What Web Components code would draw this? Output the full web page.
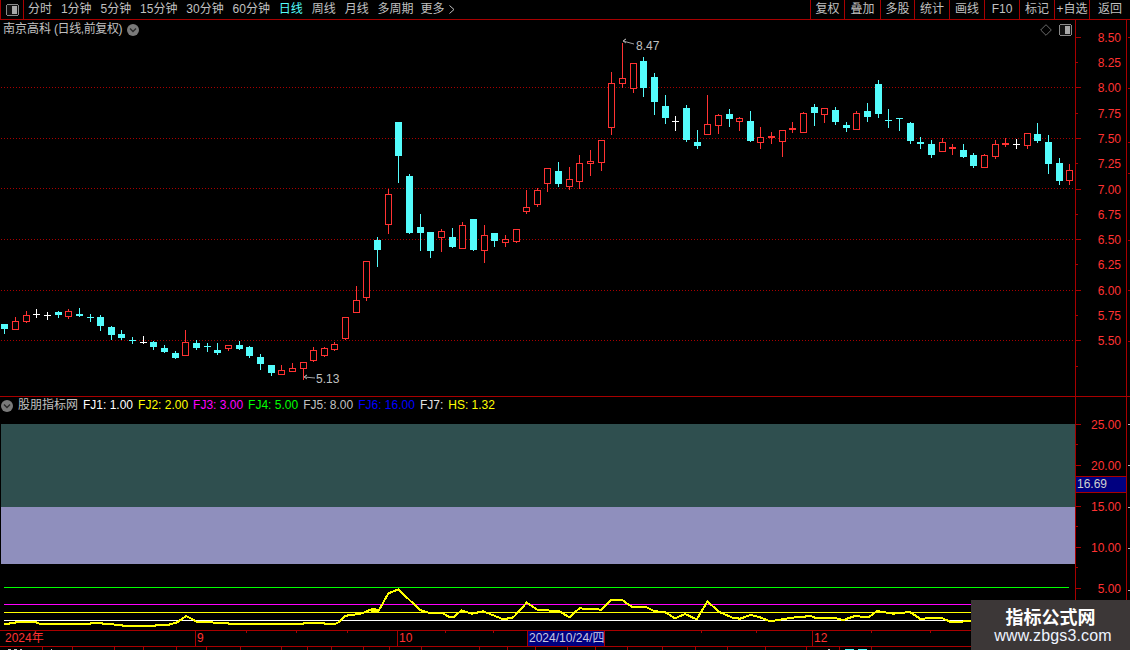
<!DOCTYPE html>
<html>
<head>
<meta charset="utf-8">
<style>
  html, body { margin: 0; height: 100%; background: #000; overflow: hidden; }
</style>
</head>
<body>
<tdx-app>
  <tdx-toolbar></tdx-toolbar>
  <tdx-kline-panel></tdx-kline-panel>
  <tdx-indicator-panel></tdx-indicator-panel>
  <tdx-time-axis></tdx-time-axis>
  <tdx-tab-strip></tdx-tab-strip>
  <site-mark></site-mark>
</tdx-app>

<script>
const FONT = `"Liberation Sans", "Noto Sans CJK SC", sans-serif`;
const LINE = "#a80000";
const RED = "#ff3232";
const CYAN = "#54fcfc";
const GREY = "#c0c0c0";

const chevronIcon = `<svg width="12" height="12" viewBox="0 0 12 12"><circle cx="6" cy="6" r="6" fill="#7a7a7a"/><polyline points="3,4.5 6,7.5 9,4.5" fill="none" stroke="#2a2a2a" stroke-width="1.4"/></svg>`;
const panelIcon = `<svg width="13" height="12" viewBox="0 0 13 12" shape-rendering="crispEdges"><rect x="0.5" y="0.5" width="12" height="11" rx="2" fill="#111" stroke="#8a8a8a"/><rect x="6" y="2" width="5" height="8" fill="#a8a8a8"/></svg>`;

class TdxApp extends HTMLElement {
  constructor() {
    super();
    this.attachShadow({ mode: "open" });
    this.shadowRoot.innerHTML = `
      <style>
        :host {
          display: flex;
          flex-direction: column;
          position: relative;
          width: 1130px;
          height: 650px;
          overflow: hidden;
          background: #000;
          font-family: ${FONT};
        }
      </style>
      <slot></slot>
    `;
  }
}

class TdxToolbar extends HTMLElement {
  constructor() {
    super();
    this.attachShadow({ mode: "open" });
    const periods = ["分时", "1分钟", "5分钟", "15分钟", "30分钟", "60分钟", "日线", "周线", "月线", "多周期"];
    const tools = [["复权", 34], ["叠加", 36], ["多股", 34], ["统计", 35], ["画线", 35], ["F10", 35], ["标记", 35], ["+自选", 35], ["返回", 41]];
    this.shadowRoot.innerHTML = `
      <style>
        :host {
          display: flex;
          flex: none;
          height: 19px;
          box-sizing: content-box;
          border-bottom: 1px solid ${LINE};
          color: ${GREY};
          font-size: 12px;
          line-height: 19px;
          white-space: nowrap;
        }
        #side {
          width: 22px;
          border-left: 1px solid ${LINE};
          border-right: 1px solid ${LINE};
          display: flex;
          align-items: center;
          justify-content: center;
        }
        #periods {
          flex: 1;
          display: flex;
          gap: 8.9px;
          padding-left: 4px;
        }
        .on { color: ${CYAN}; }
        #more { display: flex; align-items: center; gap: 5px; margin-left: -2px; }
        #tools { display: flex; }
        #tools span {
          border-left: 1px solid ${LINE};
          box-sizing: border-box;
          text-align: center;
        }
      </style>
      <div id="side">${panelIcon}</div>
      <div id="periods">
        ${periods.map((p) => `<span class="${p === "日线" ? "on" : ""}">${p}</span>`).join("")}
        <span id="more">更多<svg width="6" height="9" viewBox="0 0 6 9"><polyline points="0.5,0.5 5,4.5 0.5,8.5" fill="none" stroke="#c0c0c0"/></svg></span>
      </div>
      <div id="tools">
        ${tools.map((t) => `<span style="width:${t[1]}px">${t[0]}</span>`).join("")}
      </div>
    `;
  }
}

// every candle: kind, wick top, body top, body bottom, wick bottom (page pixels)
const CANDLES = [
  ["c",324,324,329,333],["r",317,321,329,329],["r",311,315,321,322],["w",309,314,314,317],["w",312,315,315,319],
  ["c",311,312,315,317],["r",309,311,316,318],["c",308,314,316,316],["C",314,317,317,321],["c",315,317,326,330],
  ["c",326,327,335,339],["c",330,334,338,339],["C",337,340,340,343],["w",336,342,342,343],["c",341,342,347,349],
  ["c",345,348,352,352],["c",351,353,358,358],["r",330,342,355,355],["c",340,343,348,349],["C",343,346,346,351],
  ["c",343,350,353,354],["r",345,345,348,350],["c",341,345,349,349],["c",346,347,356,357],["c",354,357,364,369],
  ["c",365,365,373,375],["r",365,370,374,374],["r",363,368,371,371],["r",362,362,368,379],["r",347,350,360,361],
  ["r",347,348,355,356],["r",342,344,349,350],["r",317,317,338,339],["r",286,300,312,312],["r",261,261,297,300],
  ["c",237,240,250,266],["r",189,194,224,233],["c",122,122,156,182],["c",174,176,233,233],["c",214,227,233,250],
  ["c",232,232,251,257],["r",229,231,237,251],["c",228,237,247,247],["r",222,225,248,248],["c",219,219,250,250],
  ["r",225,235,250,262],["c",233,233,241,246],["r",235,239,242,246],["r",229,229,241,242],["r",190,207,211,213],
  ["r",188,190,204,206],["r",168,168,183,191],["c",162,171,184,186],["r",167,179,186,189],["r",155,163,181,188],
  ["r",150,161,163,175],["r",140,140,162,170],["r",72,83,127,134],["r",43,78,83,87],["r",63,63,88,92],
  ["c",57,61,88,96],["c",73,77,102,114],["c",95,106,118,123],["w",116,121,121,130],["c",105,108,140,141],
  ["c",130,142,146,148],["r",95,124,134,134],["r",114,115,125,133],["c",109,114,119,126],["r",117,118,121,130],
  ["c",111,121,141,141],["r",127,137,142,148],["R",132,136,138,143],["r",130,130,141,156],["R",122,128,130,132],
  ["r",112,113,132,132],["c",104,107,113,125],["r",108,108,114,122],["c",107,110,122,124],["c",122,125,128,131],
  ["r",111,113,129,129],["c",103,111,117,121],["c",80,84,114,117],["C",109,120,120,127],["C",118,118,118,130],
  ["c",122,123,141,143],["c",137,142,144,148],["c",140,144,155,157],["r",138,142,151,151],["R",144,147,149,154],
  ["c",144,150,157,157],["c",153,155,166,167],["r",154,155,167,167],["r",140,144,156,158],["R",138,143,145,146],
  ["w",139,144,144,148],["r",133,133,145,148],["c",123,134,141,142],["c",135,142,164,173],["c",158,163,181,184],
  ["r",164,170,180,184],
];

class TdxKlinePanel extends HTMLElement {
  constructor() {
    super();
    this.attachShadow({ mode: "open" });
    this.shadowRoot.innerHTML = `
      <style>
        :host {
          display: flex;
          flex: none;
          height: 376px;
          position: relative;
          border-bottom: 1px solid ${LINE};
          color: ${GREY};
          font-size: 12px;
        }
        #plot { width: 1075px; height: 376px; position: relative; }
        svg { display: block; }
        text { font-family: ${FONT}; font-size: 12px; }
        #title {
          position: absolute;
          left: 3px;
          top: 1px;
          display: flex;
          align-items: center;
          gap: 5px;
          line-height: 17px;
          white-space: nowrap;
        }
        #title em { font-style: normal; letter-spacing: -0.4px; margin-left: 3px; }
        #corner {
          position: absolute;
          right: 3px;
          top: 4px;
          display: flex;
          align-items: center;
          gap: 7px;
        }
        #axis {
          width: 50px;
          border-left: 1px solid ${LINE};
          border-right: 1px solid ${LINE};
          flex: none;
        }
      </style>
      <div id="plot">
        <svg width="1075" height="376" viewBox="0 20 1075 376" shape-rendering="crispEdges">
          <path d="${this.drawDots()}" fill="${LINE}"/>
          ${this.drawCandles()}
          <g shape-rendering="auto">
            <polyline points="315,378 304,377 307,375 304,377 307,379" fill="none" stroke="#a0a0a0"/>
            <text x="316" y="383" fill="${GREY}">5.13</text>
            <polyline points="634,44 623,41 626,39 623,41 626,43" fill="none" stroke="#a0a0a0"/>
            <text x="636" y="50" fill="${GREY}">8.47</text>
          </g>
        </svg>
        <div id="title"><span>南京高科<em>(日线,前复权)</em></span>${chevronIcon}</div>
        <div id="corner">
          <svg width="12" height="12" viewBox="0 0 12 12"><polygon points="6,0.7 11.3,6 6,11.3 0.7,6" fill="none" stroke="#6a6a6a"/></svg>
          ${panelIcon}
        </div>
      </div>
      <div id="axis">${this.drawAxis()}</div>
      <tdx-side-ticks ys="37 88 142 173 240 290 341" top="20" tint="${LINE}"></tdx-side-ticks>
    `;
  }

  drawDots() {
    let d = "";
    [87, 138, 188, 239, 290, 340].forEach((y) => {
      for (let x = 1; x < 1075; x += 3) d += `M${x} ${y}h1v1h-1z`;
    });
    return d;
  }

  drawCandles() {
    let out = "";
    CANDLES.forEach((c, i) => {
      const x = Math.round(4.3 + 10.65 * i);
      const [kind, top, bodyTop, bodyBottom, bottom] = c;
      const color = kind === "w" ? "#fff" : kind === "r" || kind === "R" ? RED : CYAN;
      out += `<rect x="${x}" y="${top}" width="1" height="${bottom - top + 1}" fill="${color}"/>`;
      if (kind === "r") {
        out += `<rect x="${x - 2.5}" y="${bodyTop + 0.5}" width="6" height="${bodyBottom - bodyTop}" fill="#000" stroke="${RED}"/>`;
      } else {
        const h = kind === "w" || kind === "C" ? 1 : Math.max(bodyBottom - bodyTop, 1);
        out += `<rect x="${x - 3}" y="${bodyTop}" width="7" height="${h}" fill="${color}"/>`;
      }
    });
    return out;
  }

  drawAxis() {
    let out = "";
    for (let i = 0; i < 14; i++) {
      const price = 8.5 - i * 0.25;
      const y = Math.round(87.3 + (8 - price) * 101.2);
      const long = i % 2 === 0;
      out += `<rect x="1076" y="${y}" width="${long ? 5 : 2}" height="1" fill="${LINE}"/>`;
      if (i < 13) {
        out += `<text x="1121" y="${y + 5}" text-anchor="end" fill="${RED}" shape-rendering="auto">${price.toFixed(2)}</text>`;
      }
    }
    return `<svg width="50" height="376" viewBox="1076 20 50 376" shape-rendering="crispEdges">${out}</svg>`;
  }
}

class TdxSideTicks extends HTMLElement {
  constructor() {
    super();
    this.attachShadow({ mode: "open" });
  }

  connectedCallback() {
    const top = Number(this.getAttribute("top"));
    const tint = this.getAttribute("tint");
    const ys = this.getAttribute("ys").split(" ").map(Number);
    this.shadowRoot.innerHTML = `
      <style>
        :host { display: block; width: 4px; flex: none; position: relative; }
        i { position: absolute; left: 1px; width: 3px; height: 1px; background: ${tint}; }
      </style>
      ${ys.map((y) => `<i style="top:${y - top}px"></i>`).join("")}
    `;
  }
}

const CURVE = [
  [4,624],[9,624],[10,623],[15,623],[16,622],[36,622],[37,623],[41,624],[90,624],[91,623],[100,623],[105,624],
  [122,625],[123,626],[155,626],[156,625],[169,625],[170,624],[176,623],[182,619],[186,616],[192,619],[197,622],
  [228,623],[229,624],[303,624],[304,623],[324,623],[325,624],[335,624],[339,622],[345,616],[350,615],[360,614],
  [365,612],[372,609],[380,610],
];

// these were read at 3x from crops starting at x=370 and x=740
[[0,121],[25,124],[55,70],[85,58],[150,120],[175,128],[215,128],[240,142],[250,142],[275,121],[305,131],[340,124],
 [400,148],[430,142],[470,98],[505,121],[565,122],[598,142],[628,115],[695,119],[725,89],[755,89],[785,110],[825,110],
 [855,124],[885,126],[915,145],[945,132],[980,148],[1012,95],[1050,127],[1090,144]]
  .forEach((p) => CURVE.push([370 + p[0] / 3, 570 + p[1] / 3]));
[[0,146],[32,135],[60,142],[90,154],[125,148],[180,140],[215,139],[225,143],[285,144],[310,150],[345,138],[385,142],
 [412,123],[460,131],[510,126],[540,146],[605,144],[630,155],[665,155],[693,152],[1000,150]]
  .forEach((p) => CURVE.push([740 + p[0] / 3, 570 + p[1] / 3]));

class TdxIndicatorPanel extends HTMLElement {
  constructor() {
    super();
    this.attachShadow({ mode: "open" });
    const legend = [
      ["FJ1: 1.00", "#fff"], ["FJ2: 2.00", "#ff0"], ["FJ3: 3.00", "#f0f"], ["FJ4: 5.00", "#0f0"],
      ["FJ5: 8.00", GREY], ["FJ6: 16.00", "#00f"], ["FJ7:", "#e0e0e0"], ["HS: 1.32", "#ff0"],
    ];
    const levels = [["#0f0", 587], ["#f0f", 604], ["#ff0", 612], ["#fff", 620]];
    this.shadowRoot.innerHTML = `
      <style>
        :host {
          display: flex;
          flex: none;
          height: 233px;
          position: relative;
          color: ${GREY};
          font-size: 12px;
        }
        #plot { width: 1075px; height: 233px; position: relative; }
        svg { display: block; }
        text { font-family: ${FONT}; font-size: 12px; }
        #legend {
          position: absolute;
          left: 1px;
          top: 0;
          display: flex;
          align-items: center;
          gap: 5px;
          height: 17px;
          line-height: 17px;
          white-space: nowrap;
        }
        #axis {
          width: 50px;
          border-left: 1px solid ${LINE};
          border-right: 1px solid ${LINE};
          flex: none;
          position: relative;
        }
        #now {
          position: absolute;
          left: 0;
          right: 0;
          top: 79px;
          height: 15px;
          border-top: 1px solid ${LINE};
          border-bottom: 1px solid ${LINE};
          background: #000080;
          color: #d0d0d0;
          line-height: 15px;
          padding-left: 1px;
        }
      </style>
      <div id="plot">
        <svg width="1075" height="233" viewBox="0 397 1075 233" shape-rendering="crispEdges">
          <rect x="1" y="424" width="1074" height="83" fill="#2f4f4f"/>
          <rect x="1" y="507" width="1074" height="57" fill="#8f8fbd"/>
          ${levels.map((l) => `<rect x="4" y="${l[1]}" width="1065" height="1" fill="${l[0]}"/>`).join("")}
          <polyline points="${CURVE.map((p) => p.join(",")).join(" ")}" fill="none" stroke="#ff0" stroke-width="2"/>
        </svg>
        <div id="legend">
          ${chevronIcon}<span>股朋指标网</span>
          ${legend.map((l) => `<span style="color:${l[1]}">${l[0]}</span>`).join("")}
        </div>
      </div>
      <div id="axis">${this.drawAxis()}<div id="now">16.69</div></div>
      <tdx-side-ticks ys="424 465 507 548 590" top="397" tint="#b8b8b8"></tdx-side-ticks>
    `;
  }

  drawAxis() {
    let out = "";
    [25, 20, 15, 10, 5].forEach((v) => {
      const y = Math.round(424 + (25 - v) * 8.2);
      out += `<rect x="1076" y="${y}" width="5" height="1" fill="${LINE}"/>`;
      out += `<rect x="1076" y="${y + 20}" width="2" height="1" fill="${LINE}"/>`;
      out += `<text x="1121" y="${y + 5}" text-anchor="end" fill="${RED}" shape-rendering="auto">${v.toFixed(2)}</text>`;
    });
    return `<svg width="50" height="233" viewBox="1076 397 50 233" shape-rendering="crispEdges">${out}</svg>`;
  }
}

class TdxTimeAxis extends HTMLElement {
  constructor() {
    super();
    this.attachShadow({ mode: "open" });
    const ticks = [246, 296, 347, 445, 493, 701, 756, 871, 930];
    const marks = [["2024年", 0, 4], ["9", 195, 1], ["10", 397, 1], ["12", 812, 1]];
    this.shadowRoot.innerHTML = `
      <style>
        :host {
          display: block;
          flex: none;
          height: 15px;
          position: relative;
          border-top: 1px solid ${LINE};
          border-bottom: 1px solid ${LINE};
          color: ${RED};
          font-size: 12px;
          line-height: 15px;
          white-space: nowrap;
        }
        .mark { position: absolute; top: 0; bottom: 0; padding-left: 1px; border-left: 1px solid ${LINE}; }
        .first { border-left: 0; padding-left: 5px; }
        .tick { position: absolute; top: 0; width: 1px; height: 2px; background: ${LINE}; }
        #cursor {
          position: absolute;
          left: 527px;
          top: 0;
          width: 78px;
          height: 15px;
          box-sizing: border-box;
          padding-left: 1px;
          border-left: 1px solid ${LINE};
          border-right: 1px solid ${LINE};
          background: #000080;
          color: #c8c8e0;
          overflow: hidden;
        }
      </style>
      ${ticks.map((x) => `<i class="tick" style="left:${x}px"></i>`).join("")}
      ${marks.map((m) => `<span class="mark ${m[1] === 0 ? "first" : ""}" style="left:${m[1]}px">${m[0]}</span>`).join("")}
      <div id="cursor">2024/10/24/四</div>
    `;
  }
}

class TdxTabStrip extends HTMLElement {
  constructor() {
    super();
    this.attachShadow({ mode: "open" });
    const edges = [43, 73, 115, 144, 177, 207, 241, 282, 308, 332, 364, 390, 422, 480, 508, 536, 568, 596, 628, 663, 696, 728, 766, 807, 840, 872];
    // the tab captions are cut off by the window edge, only their top pixels show
    const bits = [[8, 3, "#c0c0c0"], [14, 3, "#c0c0c0"], [20, 2, "#c0c0c0"], [51, 1, "#c0c0c0"], [828, 2, "#c0c0c0"], [845, 9, CYAN], [858, 9, CYAN]];
    let last = 0;
    const tabs = edges.map((x) => {
      const w = x - last;
      last = x;
      return `<span style="width:${w}px"></span>`;
    });
    this.shadowRoot.innerHTML = `
      <style>
        :host { display: flex; flex: none; height: 4px; overflow: hidden; position: relative; }
        span { flex: none; height: 4px; box-sizing: border-box; border-right: 1px solid ${LINE}; }
        i { position: absolute; top: 2px; height: 1px; }
      </style>
      ${tabs.join("")}
      ${bits.map((b) => `<i style="left:${b[0]}px;width:${b[1]}px;background:${b[2]}"></i>`).join("")}
    `;
  }
}

class SiteMark extends HTMLElement {
  constructor() {
    super();
    this.attachShadow({ mode: "open" });
    this.shadowRoot.innerHTML = `
      <style>
        :host {
          position: absolute;
          left: 971px;
          top: 600px;
          width: 159px;
          height: 50px;
          background: #3c3737;
          color: #fff;
          display: flex;
          flex-direction: column;
          align-items: center;
          text-align: center;
        }
        b { font: bold 18px/20px "Noto Sans CJK SC", sans-serif; margin-top: 6px; }
        span { font: 16px/20px "Liberation Sans", sans-serif; color: #eef4ff; margin: 0 0 0 5px; letter-spacing: 0.15px; }
      </style>
      <b>指标公式网</b>
      <span>www.zbgs3.com</span>
    `;
  }
}

customElements.define("tdx-app", TdxApp);
customElements.define("tdx-toolbar", TdxToolbar);
customElements.define("tdx-side-ticks", TdxSideTicks);
customElements.define("tdx-kline-panel", TdxKlinePanel);
customElements.define("tdx-indicator-panel", TdxIndicatorPanel);
customElements.define("tdx-time-axis", TdxTimeAxis);
customElements.define("tdx-tab-strip", TdxTabStrip);
customElements.define("site-mark", SiteMark);
</script>
</body>
</html>
